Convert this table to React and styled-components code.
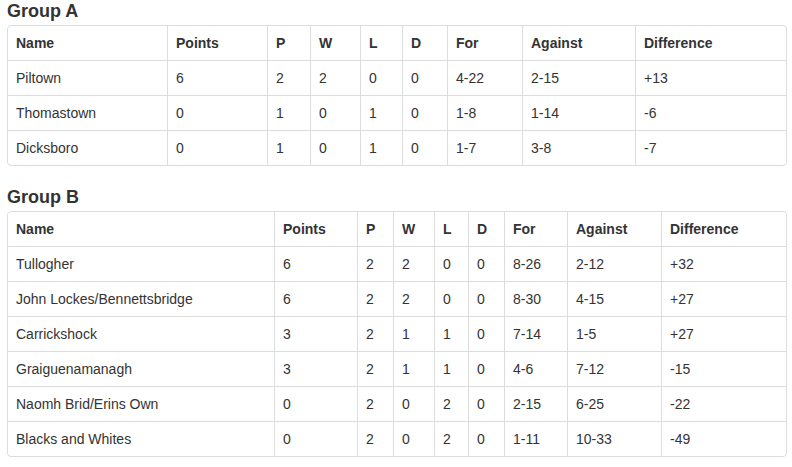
import React from 'react';
import styled, { createGlobalStyle } from 'styled-components';

const GlobalStyle = createGlobalStyle`
  html, body {
    margin: 0;
    padding: 0;
    background: #fff;
  }
  body {
    font-family: 'Liberation Sans', Arial, Helvetica, sans-serif;
    font-size: 14px;
    color: #333;
  }
`;

const Page = styled.div`
  width: 780px;
  padding-left: 7px;
  display: flex;
  flex-direction: column;
  gap: 20px;
`;

const Section = styled.section`
  display: flex;
  flex-direction: column;
`;

const Heading = styled.h4`
  margin: 1px 0 4px;
  font-size: 18px;
  line-height: 20px;
  font-weight: bold;
  color: #333;
`;

const Panel = styled.div`
  border: 1px solid #ddd;
  border-radius: 4px;
  background: #fff;
  overflow: hidden;
`;

const Table = styled.table`
  width: 100%;
  table-layout: fixed;
  border-collapse: separate;
  border-spacing: 0;
`;

const Col = styled.col`
  width: ${(p) => p.$w}px;
`;

const Cell = styled.td`
  box-sizing: border-box;
  padding: 8px;
  line-height: 18px;
  font-size: 14px;
  text-align: left;
  vertical-align: top;
  white-space: nowrap;
  color: #333;
  border-left: 1px solid #ddd;
  border-top: 1px solid #ddd;
  font-weight: ${(p) => (p.$head ? 'bold' : 'normal')};

  &:first-child {
    border-left: none;
  }
  tr:first-child > & {
    border-top: none;
  }
`;

const columns = ['Name', 'Points', 'P', 'W', 'L', 'D', 'For', 'Against', 'Difference'];

const groups = [
  {
    title: 'Group A',
    widths: [159, 100, 43, 50, 42, 45, 75, 113, 151],
    rows: [
      ['Piltown', '6', '2', '2', '0', '0', '4-22', '2-15', '+13'],
      ['Thomastown', '0', '1', '0', '1', '0', '1-8', '1-14', '-6'],
      ['Dicksboro', '0', '1', '0', '1', '0', '1-7', '3-8', '-7'],
    ],
  },
  {
    title: 'Group B',
    widths: [266, 83, 36, 41, 34, 36, 63, 94, 125],
    rows: [
      ['Tullogher', '6', '2', '2', '0', '0', '8-26', '2-12', '+32'],
      ['John Lockes/Bennettsbridge', '6', '2', '2', '0', '0', '8-30', '4-15', '+27'],
      ['Carrickshock', '3', '2', '1', '1', '0', '7-14', '1-5', '+27'],
      ['Graiguenamanagh', '3', '2', '1', '1', '0', '4-6', '7-12', '-15'],
      ['Naomh Brid/Erins Own', '0', '2', '0', '2', '0', '2-15', '6-25', '-22'],
      ['Blacks and Whites', '0', '2', '0', '2', '0', '1-11', '10-33', '-49'],
    ],
  },
];

const GroupTable = ({ title, widths, rows }) => (
  <Section>
    <Heading>{title}</Heading>
    <Panel>
      <Table>
        <colgroup>
          {widths.map((w, i) => (
            <Col key={i} $w={w} />
          ))}
        </colgroup>
        <tbody>
          <tr>
            {columns.map((c) => (
              <Cell as="th" key={c} $head>
                {c}
              </Cell>
            ))}
          </tr>
          {rows.map((r) => (
            <tr key={r[0]}>
              {r.map((v, i) => (
                <Cell key={i}>{v}</Cell>
              ))}
            </tr>
          ))}
        </tbody>
      </Table>
    </Panel>
  </Section>
);

export default function App() {
  return (
    <>
      <GlobalStyle />
      <Page>
        {groups.map((g) => (
          <GroupTable key={g.title} {...g} />
        ))}
      </Page>
    </>
  );
}
